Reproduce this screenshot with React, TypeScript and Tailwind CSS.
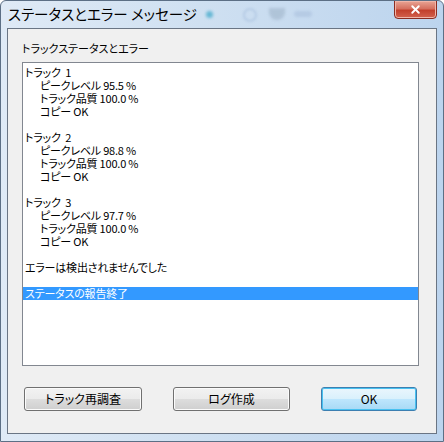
import { X } from "lucide-react";

const FONT = "[font-family:'Noto_Sans_CJK_JP','Noto_Sans',sans-serif] [font-feature-settings:'palt']";

type Line = { text: string; indent?: boolean; selected?: boolean };

const tracks = [
  { no: 1, peak: "95.5", quality: "100.0" },
  { no: 2, peak: "98.8", quality: "100.0" },
  { no: 3, peak: "97.7", quality: "100.0" },
];

const lines: Line[] = [];
tracks.forEach((t) => {
  lines.push({ text: `トラック  ${t.no}` });
  lines.push({ text: `ピークレベル ${t.peak} %`, indent: true });
  lines.push({ text: `トラック品質 ${t.quality} %`, indent: true });
  lines.push({ text: "コピー OK", indent: true });
  lines.push({ text: "" });
});
lines.push({ text: "エラーは検出されませんでした" });
lines.push({ text: "" });
lines.push({ text: "ステータスの報告終了", selected: true });

function DialogButton({ label, primary, width }: { label: string; primary?: boolean; width: string }) {
  return (
    <button
      type="button"
      className={`relative h-[24px] ${width} rounded-[3px] border text-[12px] text-black ${
        primary
          ? "border-[#3c7fb1] bg-[linear-gradient(#eaf6fd_0%,#d9f0fc_50%,#bee6fd_50%,#a7d9f5_100%)] shadow-[inset_0_0_0_1px_#48c1f0]"
          : "border-[#707070] bg-[linear-gradient(#f2f2f2_0%,#ebebeb_50%,#dddddd_50%,#cfcfcf_100%)] shadow-[inset_0_0_0_1px_#fbfbfb]"
      }`}
    >
      {label}
    </button>
  );
}

export default function App() {
  return (
    <div
      className={`${FONT} flex h-[442px] w-[444px] flex-col overflow-hidden rounded-t-[6px] border border-[#5c6f85] bg-[linear-gradient(90deg,#dfeaf6_0%,#cfe0f1_45%,#bcd4ee_100%)]`}
    >
      {/* title bar */}
      <div className="relative flex h-[27px] shrink-0 items-center pl-[7px]">
        <span className="text-[14.5px] leading-none text-black">ステータスとエラー メッセージ</span>
        <div className="absolute left-[205px] top-[10px] h-[7px] w-[7px] rounded-full bg-[#3aa7c9] opacity-70 blur-[1.5px]" />
        <div className="absolute left-[242px] top-[7px] h-[14px] w-[14px] rounded-full border-2 border-[#a9c1df] opacity-60 blur-[1px]" />
        <div className="absolute left-[268px] top-[7px] h-[12px] w-[16px] rounded-b-full bg-[#9fb4c9] opacity-60 blur-[1.5px]" />
        <div className="absolute left-[293px] top-[10px] h-[6px] w-[18px] rounded bg-[#a9bfdc] opacity-60 blur-[1.5px]" />
        <div className="absolute right-[6px] top-[-1px] flex h-[19px] w-[43px] items-center justify-center rounded-b-[4px] border border-[#8b2d22] bg-[linear-gradient(#e9a595_0%,#d5705f_45%,#c2402c_55%,#d3624e_100%)] shadow-[inset_0_0_0_1px_#f0b5a8]">
          <X className="h-[13px] w-[13px] text-white" strokeWidth={3.5} />
        </div>
      </div>

      {/* client area */}
      <div className="mx-[6px] mb-[7px] flex flex-1 flex-col border border-[#6a7584] bg-[#f0f0f0] pl-[14px] pr-[17px] pt-[12px]">
        <div className="h-[14px] text-[11px] leading-[14px] text-black">トラックステータスとエラー</div>
        <div className="mt-[7px] h-[304px] border border-[#828790] bg-white pt-[3px] text-[11px] leading-[13px] tracking-[-0.2px] text-black">
          {lines.map((l, i) => (
            <div
              key={i}
              className={`h-[13px] whitespace-pre ${l.indent ? "pl-[17px]" : "pl-[2px]"} ${
                l.selected ? "bg-[#3399ff] text-white" : ""
              }`}
            >
              {l.text}
            </div>
          ))}
        </div>
        <div className="mt-[21px] flex gap-[31px] pl-[2px]">
          <DialogButton label="トラック再調査" width="w-[118px]" />
          <DialogButton label="ログ作成" width="w-[117px]" />
          <DialogButton label="OK" width="w-[96px]" primary />
        </div>
      </div>
    </div>
  );
}
